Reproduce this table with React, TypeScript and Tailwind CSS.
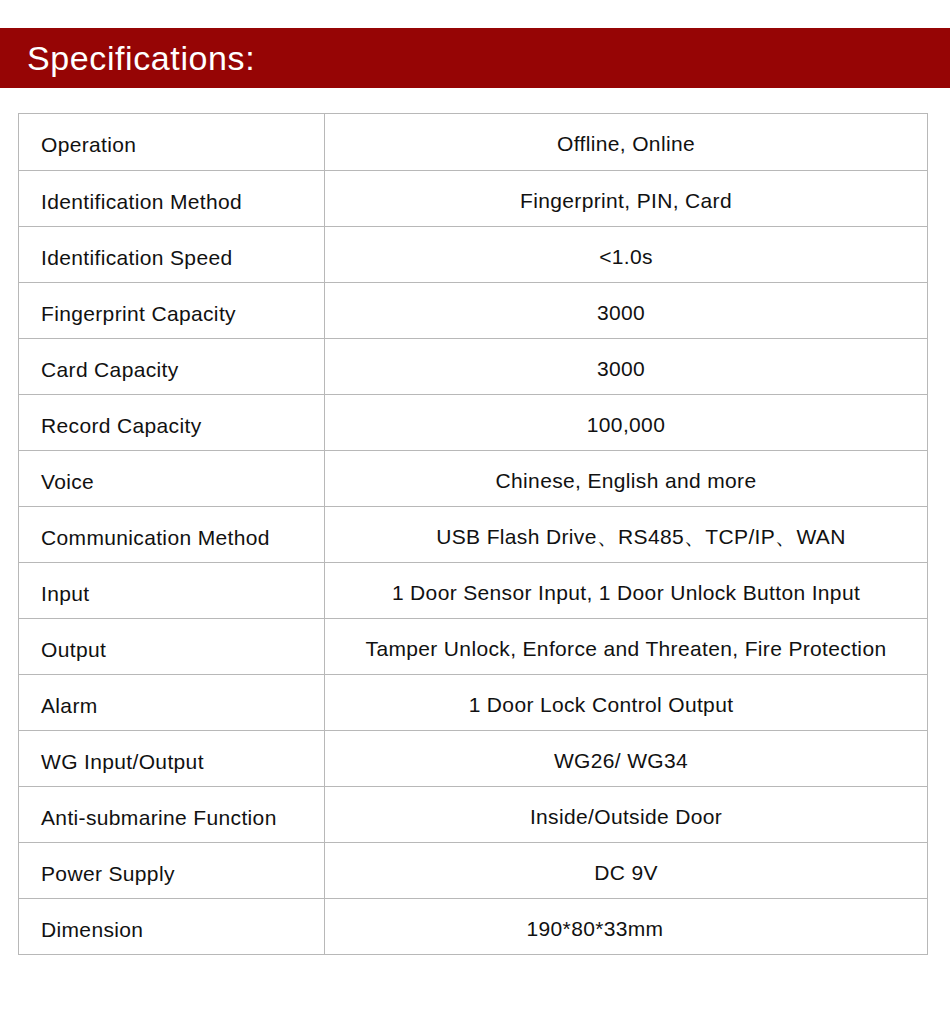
// Product specifications sheet
const specs: { label: string; value: string; shift?: string }[] = [
  { label: "Operation", value: "Offline, Online" },
  { label: "Identification Method", value: "Fingerprint, PIN, Card" },
  { label: "Identification Speed", value: "<1.0s" },
  { label: "Fingerprint Capacity", value: "3000", shift: "pr-[10px]" },
  { label: "Card Capacity", value: "3000", shift: "pr-[10px]" },
  { label: "Record Capacity", value: "100,000" },
  { label: "Voice", value: "Chinese, English and more" },
  { label: "Communication Method", value: "USB Flash Drive、RS485、TCP/IP、WAN", shift: "pl-[30px]" },
  { label: "Input", value: "1 Door Sensor Input, 1 Door Unlock Button Input" },
  { label: "Output", value: "Tamper Unlock, Enforce and Threaten, Fire Protection" },
  { label: "Alarm", value: "1 Door Lock Control Output", shift: "pr-[50px]" },
  { label: "WG Input/Output", value: "WG26/ WG34", shift: "pr-[10px]" },
  { label: "Anti-submarine Function", value: "Inside/Outside Door" },
  { label: "Power Supply", value: "DC 9V" },
  { label: "Dimension", value: "190*80*33mm", shift: "pr-[62px]" },
];

export default function App() {
  return (
    <div className="w-[950px] h-[1012px] bg-white pt-[28px] font-['Liberation_Sans',Arial,sans-serif]">
      <div className="h-[60px] bg-[#960505] flex items-center pl-[27px]">
        <h1 className="text-white text-[34px] tracking-[0.6px] leading-none pb-[1px]">Specifications:</h1>
      </div>

      <div className="ml-[18px] mt-[25px] w-[910px] border border-[#b8b8b8]">
        {specs.map((row, i) => (
          <div
            key={row.label}
            className={`flex h-[56px] text-[#111] text-[21px] tracking-[0.35px] ${i > 0 ? "border-t border-[#b8b8b8]" : ""}`}
          >
            <div className="w-[306px] border-r border-[#b8b8b8] flex items-center pl-[22px] pt-[6px]">
              {row.label}
            </div>
            <div className={`flex-1 flex items-center justify-center pt-[4px] ${row.shift ?? ""}`}>
              {row.value}
            </div>
          </div>
        ))}
      </div>
    </div>
  );
}
